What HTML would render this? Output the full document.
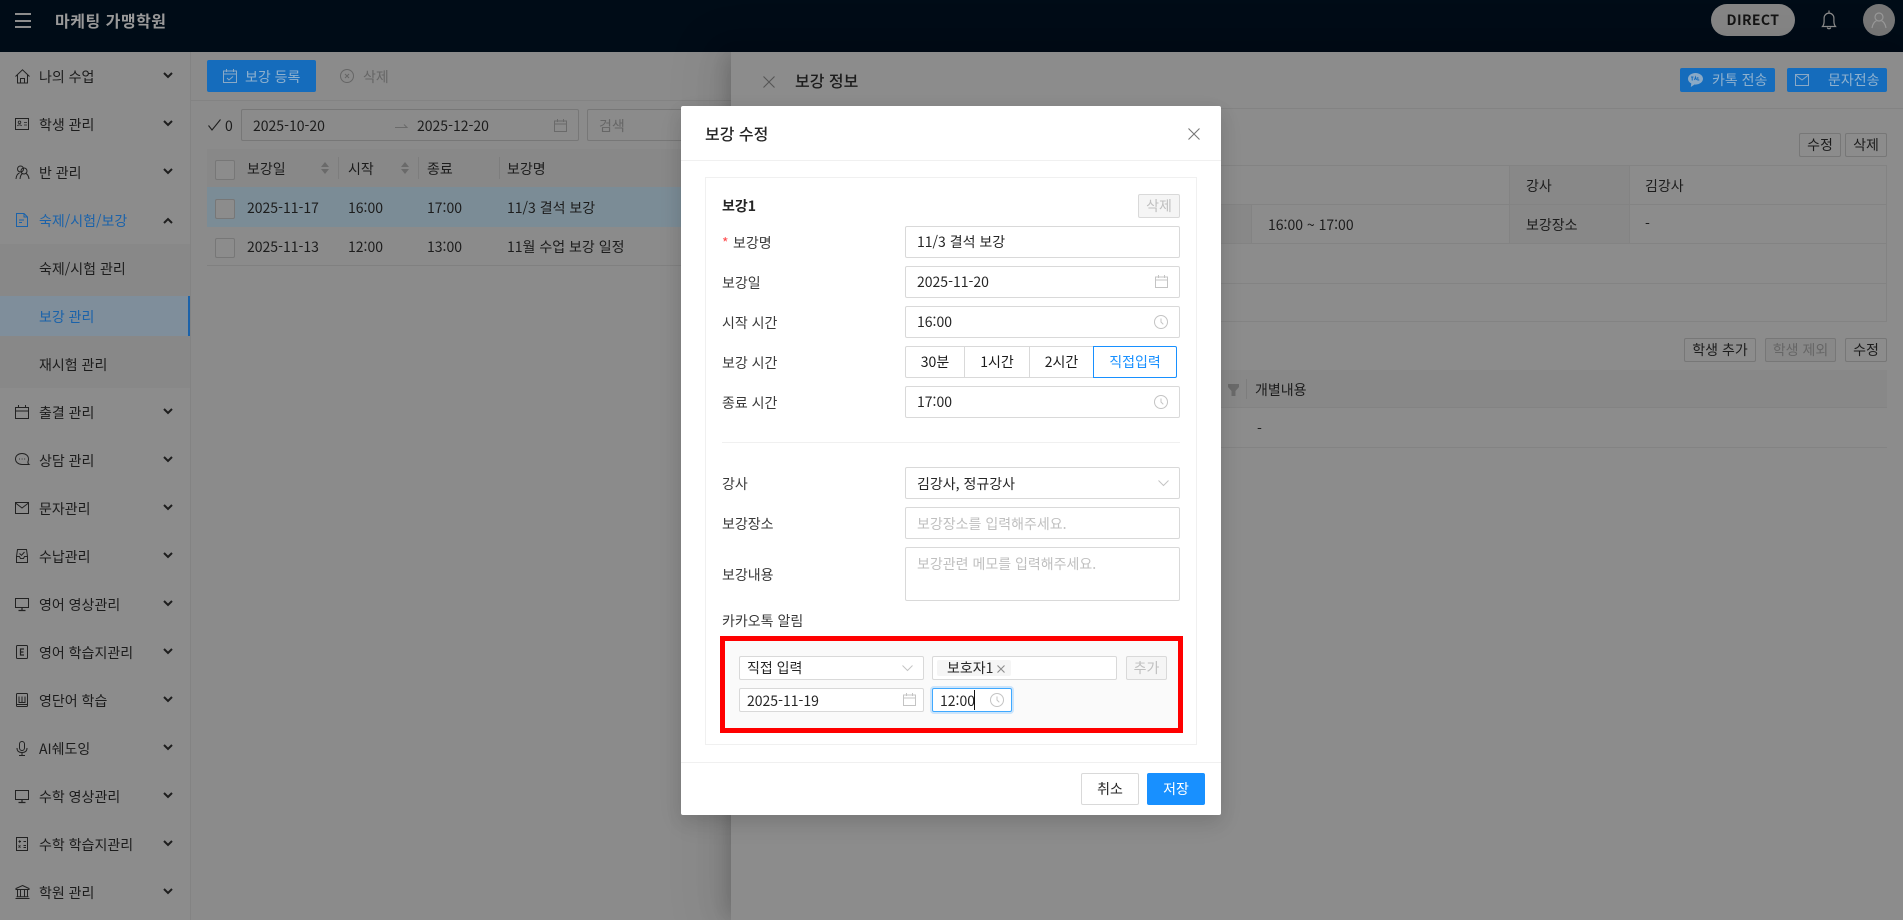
<!DOCTYPE html>
<html lang="ko"><head><meta charset="utf-8"><title>보강 수정</title>
<style>
*{box-sizing:border-box}
html,body{margin:0;padding:0;width:1903px;height:920px;overflow:hidden;background:#8b8b8b}
body{position:relative;font-family:"Noto Sans CJK KR","Liberation Sans",sans-serif;font-size:14px;color:#1c1c1c}
.a{position:absolute}
.t{position:absolute;white-space:nowrap;line-height:20px;height:20px}
.b{position:absolute;border:1px solid #777;border-radius:2px}
svg{position:absolute;overflow:visible;fill:none}
.menu{stroke:#222;stroke-width:1}
.chev{stroke:#1e1e1e;stroke-width:2}
.in{position:absolute;border:1px solid #d9d9d9;border-radius:2px;background:#fff}
.gi{stroke:#c4c4c4;stroke-width:1}
.l{color:#3a3a3a}
.ph{color:#bfbfbf}
.m{color:#262626}
.dbtn{text-align:center;line-height:22px;font-size:14px}
</style></head><body>

<!-- header -->
<div class="a" style="left:0;top:0;width:1903px;height:52px;background:#000c17"></div>
<div class="a" style="left:15px;top:13px;width:16px;height:1.5px;background:#8c8c8c"></div>
<div class="a" style="left:15px;top:20px;width:16px;height:1.5px;background:#8c8c8c"></div>
<div class="a" style="left:15px;top:26px;width:16px;height:1.5px;background:#8c8c8c"></div>
<div class="t" style="left:55px;top:10px;font-size:16px;font-weight:700;letter-spacing:.5px;color:#9a9a9a">마케팅 가맹학원</div>
<div class="a" style="left:1711px;top:4px;width:84px;height:32px;border-radius:16px;background:#858585;text-align:center;line-height:32px;font-weight:700;font-size:14px;color:#141414;letter-spacing:.4px">DIRECT</div>
<svg style="left:1820px;top:8px" width="18" height="24" viewBox="0 0 18 22" stroke="#8c8c8c" stroke-width="1.2"><path d="M2.500 17.500c1.300-1.500 1.600-3 1.600-5.500V9a4.900 4.900 0 0 1 9.800 0v3c0 2.500.3 4 1.600 5.500z"/><path d="M9 1.500v2.400M7.300 18.500a1.800 1.800 0 0 0 3.400 0"/></svg>
<div class="a" style="left:1863px;top:4px;width:32px;height:32px;border-radius:50%;background:#777"></div>
<svg style="left:1871px;top:12px" width="16" height="17" viewBox="0 0 16 17" stroke="#999" stroke-width="1.2"><circle cx="8" cy="5" r="4"/><path d="M1 16c.5-4 3-7 4.500-7M15 16c-.5-4-3-7-4.500-7"/></svg>

<!-- sidebar -->
<div class="a" style="left:0;top:52px;width:191px;height:868px;background:#8c8c8c;border-right:1px solid #838383"></div>
<div class="a" style="left:0;top:244px;width:190px;height:144px;background:#888"></div>
<div class="a" style="left:0;top:296px;width:190px;height:40px;background:#7f8e9b"></div>
<div class="a" style="left:188px;top:296px;width:2px;height:40px;background:#1a62aa"></div>

<div class="t" style="left:39px;top:67px">나의 수업</div>
<div class="t" style="left:39px;top:115px">학생 관리</div>
<div class="t" style="left:39px;top:163px">반 관리</div>
<div class="t" style="left:39px;top:211px;color:#1a62aa">숙제/시험/보강</div>
<div class="t" style="left:39px;top:259px">숙제/시험 관리</div>
<div class="t" style="left:39px;top:307px;color:#1a62aa">보강 관리</div>
<div class="t" style="left:39px;top:355px">재시험 관리</div>
<div class="t" style="left:39px;top:403px">출결 관리</div>
<div class="t" style="left:39px;top:451px">상담 관리</div>
<div class="t" style="left:39px;top:499px">문자관리</div>
<div class="t" style="left:39px;top:547px">수납관리</div>
<div class="t" style="left:39px;top:595px">영어 영상관리</div>
<div class="t" style="left:39px;top:643px">영어 학습지관리</div>
<div class="t" style="left:39px;top:691px">영단어 학습</div>
<div class="t" style="left:39px;top:739px">AI쉐도잉</div>
<div class="t" style="left:39px;top:787px">수학 영상관리</div>
<div class="t" style="left:39px;top:835px">수학 학습지관리</div>
<div class="t" style="left:39px;top:883px">학원 관리</div>

<!-- chevrons -->
<svg style="left:163px;top:72px" width="10" height="6" class="chev"><path d="M1 1l4 4 4-4"/></svg>
<svg style="left:163px;top:120px" width="10" height="6" class="chev"><path d="M1 1l4 4 4-4"/></svg>
<svg style="left:163px;top:168px" width="10" height="6" class="chev"><path d="M1 1l4 4 4-4"/></svg>
<svg style="left:163px;top:218px" width="10" height="6" class="chev"><path d="M1 5l4-4 4 4"/></svg>
<svg style="left:163px;top:408px" width="10" height="6" class="chev"><path d="M1 1l4 4 4-4"/></svg>
<svg style="left:163px;top:456px" width="10" height="6" class="chev"><path d="M1 1l4 4 4-4"/></svg>
<svg style="left:163px;top:504px" width="10" height="6" class="chev"><path d="M1 1l4 4 4-4"/></svg>
<svg style="left:163px;top:552px" width="10" height="6" class="chev"><path d="M1 1l4 4 4-4"/></svg>
<svg style="left:163px;top:600px" width="10" height="6" class="chev"><path d="M1 1l4 4 4-4"/></svg>
<svg style="left:163px;top:648px" width="10" height="6" class="chev"><path d="M1 1l4 4 4-4"/></svg>
<svg style="left:163px;top:696px" width="10" height="6" class="chev"><path d="M1 1l4 4 4-4"/></svg>
<svg style="left:163px;top:744px" width="10" height="6" class="chev"><path d="M1 1l4 4 4-4"/></svg>
<svg style="left:163px;top:792px" width="10" height="6" class="chev"><path d="M1 1l4 4 4-4"/></svg>
<svg style="left:163px;top:840px" width="10" height="6" class="chev"><path d="M1 1l4 4 4-4"/></svg>
<svg style="left:163px;top:888px" width="10" height="6" class="chev"><path d="M1 1l4 4 4-4"/></svg>

<!-- menu icons -->
<svg class="menu" style="left:15px;top:69px" width="15" height="15" viewBox="0 0 15 15"><path d="M.5 7.500L7.500.8l7 6.700M2.500 6v8h10V6M5.500 14V9.500h4V14"/></svg>
<svg class="menu" style="left:15px;top:118px" width="14" height="12" viewBox="0 0 14 12"><rect x=".5" y=".5" width="13" height="11"/><circle cx="4.500" cy="4.300" r="1.300" stroke-width=".8"/><path d="M2.500 8c.3-1.500 3.700-1.500 4 0M9 4.500h3M9 7h3" stroke-width=".8"/></svg>
<svg class="menu" style="left:15px;top:165px" width="15" height="15" viewBox="0 0 15 15"><circle cx="5.500" cy="4" r="3"/><circle cx="9" cy="6" r="3"/><path d="M1 14c.3-3.500 2-5.500 3.500-6M14 14c-.3-3-1.800-5-3-5.500M5 14c.3-3 1.500-5 2.500-5.500"/></svg>
<svg style="left:16px;top:213px" width="12" height="14" viewBox="0 0 12 14" stroke="#1a62aa"><path d="M.5.500h7.500l3.500 3.500v9.500H.5zM8 .5V4h3.500M3 7h5M3 9.500h3"/></svg>
<svg class="menu" style="left:15px;top:405px" width="14" height="14" viewBox="0 0 14 14"><rect x=".5" y="2.500" width="13" height="11"/><path d="M.5 6h13M3.500 0v3M10.500 0v3"/></svg>
<svg class="menu" style="left:15px;top:453px" width="15" height="14" viewBox="0 0 15 14"><path d="M7 .5C3.400.5.500 2.800.500 6c0 3 2.900 5.500 6.500 5.500h7c-1-.8-1.200-2-1-3 .4-.8.500-1.600.500-2.500C13.500 2.800 10.600.5 7 .5z"/><path d="M4 6h.8M6.700 6h.8M9.300 6h.8"/></svg>
<svg class="menu" style="left:15px;top:502px" width="14" height="12" viewBox="0 0 14 12"><rect x=".5" y=".5" width="13" height="11"/><path d="M.5 1l6.500 5 6.500-5"/></svg>
<svg class="menu" style="left:16px;top:549px" width="12" height="14" viewBox="0 0 12 14"><path d="M1.500.5h9l1 7v6H.5v-6zM.5 7.500H3.500L4.500 9.500h3L8.500 7.500h3M3.500 4.500l2 1.800 3-3.300"/></svg>
<svg class="menu" style="left:15px;top:598px" width="14" height="13" viewBox="0 0 14 13"><rect x=".5" y=".5" width="13" height="9"/><path d="M7 10v2M3.500 12.500h7" stroke-width="1.200"/></svg>
<svg class="menu" style="left:16px;top:645px" width="12" height="14" viewBox="0 0 12 14"><rect x=".5" y=".5" width="11" height="13" rx="1"/><path d="M8 4H4.500v6H8M4.500 7H7.500" stroke-width="1.200"/></svg>
<svg class="menu" style="left:16px;top:693px" width="12" height="14" viewBox="0 0 12 14"><rect x=".5" y=".5" width="11" height="13" rx="1"/><path d="M3 3.500V9.500H9V3.500M6 3.500V9.500M1 11.500h10" stroke-width="1"/></svg>
<svg class="menu" style="left:16px;top:741px" width="12" height="15" viewBox="0 0 12 15"><rect x="3.500" y=".5" width="5" height="9" rx="2.500"/><path d="M1 7c0 3 2 4.500 5 4.500S11 10 11 7M6 11.500V14M3 14.500h6"/></svg>
<svg class="menu" style="left:15px;top:790px" width="14" height="13" viewBox="0 0 14 13"><rect x=".5" y=".5" width="13" height="9"/><path d="M7 10v2M3.500 12.500h7" stroke-width="1.200"/></svg>
<svg class="menu" style="left:16px;top:837px" width="12" height="14" viewBox="0 0 12 14"><rect x=".5" y=".5" width="11" height="13"/><path d="M2.500 4.500h2.500M3.700 3.200v2.600M7.500 4.500H10M2.500 8.500l2 2M4.500 8.500l-2 2M7.500 8.500H10M7.500 10.500H10"/></svg>
<svg class="menu" style="left:15px;top:885px" width="15" height="14" viewBox="0 0 15 14"><path d="M7.500.5L14 3.500v1H1v-1zM2.500 5v6.500M5.500 5v6.500M9.500 5v6.500M12.500 5v6.500M1.500 11.800h12M.5 13.500h14"/></svg>

<!-- main toolbar -->
<div class="a" style="left:191px;top:100px;width:540px;height:1px;background:#838383"></div>
<div class="a" style="left:207px;top:60px;width:109px;height:32px;background:#156cbc;border-radius:2px"></div>
<svg style="left:223px;top:69px" width="14" height="14" viewBox="0 0 14 14" stroke="#8aa9c6"><rect x=".5" y="2" width="13" height="11.500"/><path d="M.5 5h13M3.500 0v3M10.500 0v3M4 9l2 2 4-3.500"/></svg>
<div class="t" style="left:245px;top:67px;color:#8fb1ce">보강 등록</div>
<svg style="left:340px;top:69px" width="14" height="14" viewBox="0 0 14 14" stroke="#666"><circle cx="7" cy="7" r="6.500"/><path d="M5 5l4 4M9 5l-4 4"/></svg>
<div class="t" style="left:363px;top:67px;color:#666">삭제</div>

<svg style="left:208px;top:119px" width="13" height="12" viewBox="0 0 13 12" stroke="#1e1e1e" stroke-width="1.100"><path d="M.5 6.500l3.500 4.500L12.500 .5"/></svg>
<div class="t" style="left:225px;top:116px">0</div>
<div class="b" style="left:241px;top:109px;width:338px;height:32px"></div>
<div class="t" style="left:253px;top:116px">2025-10-20</div>
<svg style="left:395px;top:122px" width="13" height="6" stroke="#6a6a6a"><path d="M0 5.500h12L9 2.500"/></svg>
<div class="t" style="left:417px;top:116px">2025-12-20</div>
<svg style="left:554px;top:119px" width="13" height="13" viewBox="0 0 13 13" stroke="#6a6a6a"><rect x=".5" y="2" width="12" height="10.500"/><path d="M.5 5h12M3.500 0v3M9.500 0v3"/></svg>
<div class="b" style="left:587px;top:109px;width:120px;height:32px"></div>
<div class="t" style="left:599px;top:116px;color:#666">검색</div>

<!-- main table -->
<div class="a" style="left:207px;top:149px;width:524px;height:38px;background:#888"></div>
<div class="a" style="left:207px;top:187px;width:524px;height:40px;background:#7b8c96"></div>
<div class="a" style="left:207px;top:265px;width:524px;height:1px;background:#808080"></div>
<div class="a" style="left:338px;top:157px;width:1px;height:22px;background:#7d7d7d"></div>
<div class="a" style="left:418px;top:157px;width:1px;height:22px;background:#7d7d7d"></div>
<div class="a" style="left:499px;top:157px;width:1px;height:22px;background:#7d7d7d"></div>
<div class="b" style="left:215px;top:160px;width:20px;height:20px;background:#8c8c8c"></div>
<div class="b" style="left:215px;top:199px;width:20px;height:20px;background:#8c8c8c"></div>
<div class="b" style="left:215px;top:238px;width:20px;height:20px;background:#8c8c8c"></div>
<div class="t" style="left:247px;top:159px">보강일</div>
<div class="t" style="left:348px;top:159px">시작</div>
<div class="t" style="left:427px;top:159px">종료</div>
<div class="t" style="left:507px;top:159px">보강명</div>
<svg style="left:321px;top:162px" width="8" height="12"><path fill="#6a6a6a" d="M4 0l4 5H0zM4 12L0 7h8z"/></svg>
<svg style="left:401px;top:162px" width="8" height="12"><path fill="#6a6a6a" d="M4 0l4 5H0zM4 12L0 7h8z"/></svg>
<div class="t" style="left:247px;top:198px">2025-11-17</div>
<div class="t" style="left:348px;top:198px">16:00</div>
<div class="t" style="left:427px;top:198px">17:00</div>
<div class="t" style="left:507px;top:198px">11/3 결석 보강</div>
<div class="t" style="left:247px;top:237px">2025-11-13</div>
<div class="t" style="left:348px;top:237px">12:00</div>
<div class="t" style="left:427px;top:237px">13:00</div>
<div class="t" style="left:507px;top:237px">11월 수업 보강 일정</div>

<!-- drawer -->
<div class="a" style="left:731px;top:52px;width:1172px;height:868px;background:#8c8c8c;box-shadow:-6px 0 16px -4px rgba(0,0,0,.14),-9px 0 28px 0 rgba(0,0,0,.08),-12px 0 48px 16px rgba(0,0,0,.04)"></div>
<div class="a" style="left:731px;top:108px;width:1172px;height:1px;background:#838383"></div>
<svg style="left:763px;top:76px" width="12" height="12" stroke="#555" stroke-width="1.100"><path d="M.5.500l11 11M11.500.500l-11 11"/></svg>
<div class="t" style="left:795px;top:70px;font-size:16px;font-weight:500">보강 정보</div>

<div class="a" style="left:1680px;top:68px;width:95px;height:24px;background:#156cbc;border-radius:2px"></div>
<svg style="left:1688px;top:73px" width="15" height="14" viewBox="0 0 15 14"><path fill="#8aa9c6" d="M7.500 0C3.400 0 0 2.500 0 5.800c0 2 1.300 3.700 3.300 4.700L2.800 14l3.700-2.500c.3 0 .7.100 1 .100 4.100 0 7.500-2.600 7.500-5.800S11.600 0 7.500 0z"/><path stroke="#156cbc" stroke-width="1" d="M3 4h2.500M4.200 4v3.500M6.500 7l1-3 1 3M9.800 4v3h1.500"/></svg>
<div class="t" style="left:1712px;top:70px;color:#8fb1ce">카톡 전송</div>
<div class="a" style="left:1787px;top:68px;width:100px;height:24px;background:#156cbc;border-radius:2px"></div>
<svg style="left:1795px;top:74px" width="14" height="12" viewBox="0 0 14 12" stroke="#8aa9c6"><rect x=".5" y=".5" width="13" height="11"/><path d="M.5 1L7 6l6.500-5"/></svg>
<div class="t" style="left:1828px;top:70px;color:#8fb1ce">문자전송</div>

<div class="b dbtn" style="left:1799px;top:133px;width:42px;height:24px">수정</div>
<div class="b dbtn" style="left:1845px;top:133px;width:42px;height:24px">삭제</div>

<!-- drawer table 1 -->
<div class="a" style="left:731px;top:165px;width:1156px;height:157px;border:1px solid #838383;border-left:0"></div>
<div class="a" style="left:731px;top:204px;width:1156px;height:1px;background:#838383"></div>
<div class="a" style="left:731px;top:243px;width:1156px;height:1px;background:#838383"></div>
<div class="a" style="left:731px;top:283px;width:1156px;height:1px;background:#838383"></div>
<div class="a" style="left:1221px;top:205px;width:31px;height:38px;background:#888;border-right:1px solid #838383"></div>
<div class="a" style="left:1509px;top:166px;width:121px;height:77px;background:#888;border-left:1px solid #838383;border-right:1px solid #838383"></div>
<div class="a" style="left:1509px;top:204px;width:121px;height:1px;background:#838383"></div>
<div class="t" style="left:1526px;top:176px">강사</div>
<div class="t" style="left:1645px;top:176px">김강사</div>
<div class="t" style="left:1268px;top:215px">16:00 ~ 17:00</div>
<div class="t" style="left:1526px;top:215px">보강장소</div>
<div class="t" style="left:1645px;top:214px">-</div>

<div class="b dbtn" style="left:1684px;top:338px;width:72px;height:24px">학생 추가</div>
<div class="b dbtn" style="left:1765px;top:338px;width:71px;height:24px;color:#666;background:#888">학생 제외</div>
<div class="b dbtn" style="left:1845px;top:338px;width:42px;height:24px">수정</div>

<!-- drawer table 2 -->
<div class="a" style="left:731px;top:370px;width:1156px;height:38px;background:#888;border-bottom:1px solid #838383"></div>
<div class="a" style="left:731px;top:447px;width:1156px;height:1px;background:#838383"></div>
<svg style="left:1228px;top:384px" width="11" height="12"><path fill="#6a6a6a" d="M0 0h11v3L7.500 7v5h-4V7L0 3z"/></svg>
<div class="a" style="left:1246px;top:379px;width:1px;height:20px;background:#7d7d7d"></div>
<div class="t" style="left:1255px;top:380px">개별내용</div>
<div class="t" style="left:1257px;top:419px">-</div>

<!-- modal -->
<div class="a" style="left:681px;top:106px;width:540px;height:709px;background:#fff;border-radius:2px;box-shadow:0 6px 16px rgba(0,0,0,.1),0 9px 28px rgba(0,0,0,.06)"></div>
<div class="t m" style="left:705px;top:122px;font-size:16px;font-weight:500;line-height:22px;height:22px">보강 수정</div>
<svg style="left:1188px;top:128px" width="12" height="12" stroke="#777" stroke-width="1.100"><path d="M.5.500l11 11M11.500.500l-11 11"/></svg>
<div class="a" style="left:681px;top:160px;width:540px;height:1px;background:#f0f0f0"></div>
<div class="a" style="left:705px;top:177px;width:492px;height:568px;border:1px solid #f0f0f0"></div>

<div class="t m" style="left:722px;top:196px;font-weight:700">보강1</div>
<div class="a" style="left:1138px;top:194px;width:42px;height:24px;background:#f5f5f5;border:1px solid #d9d9d9;border-radius:2px;color:#bfbfbf;text-align:center;line-height:22px">삭제</div>

<div class="t" style="left:722px;top:233px;color:#ff4d4f">*</div>
<div class="t l" style="left:733px;top:233px">보강명</div>
<div class="t l" style="left:722px;top:273px">보강일</div>
<div class="t l" style="left:722px;top:313px">시작 시간</div>
<div class="t l" style="left:722px;top:353px">보강 시간</div>
<div class="t l" style="left:722px;top:393px">종료 시간</div>

<div class="in" style="left:905px;top:226px;width:275px;height:32px"></div>
<div class="t m" style="left:917px;top:232px">11/3 결석 보강</div>
<div class="in" style="left:905px;top:266px;width:275px;height:32px"></div>
<div class="t m" style="left:917px;top:272px">2025-11-20</div>
<svg class="gi" style="left:1155px;top:275px" width="13" height="13" viewBox="0 0 13 13"><rect x=".5" y="2" width="12" height="10.500"/><path d="M.5 5h12M3.500 0v3M9.500 0v3"/></svg>
<div class="in" style="left:905px;top:306px;width:275px;height:32px"></div>
<div class="t m" style="left:917px;top:312px">16:00</div>
<svg class="gi" style="left:1154px;top:315px" width="14" height="14" viewBox="0 0 14 14"><circle cx="7" cy="7" r="6.500"/><path d="M7 3.500V7l2.300 2.300"/></svg>

<div class="in" style="left:905px;top:346px;width:60px;height:32px;border-radius:2px 0 0 2px;text-align:center;line-height:30px">30분</div>
<div class="in" style="left:964px;top:346px;width:66px;height:32px;border-radius:0;text-align:center;line-height:30px">1시간</div>
<div class="in" style="left:1029px;top:346px;width:65px;height:32px;border-radius:0;text-align:center;line-height:30px">2시간</div>
<div class="in" style="left:1093px;top:346px;width:84px;height:32px;border:1px solid #1890ff;border-radius:0 2px 2px 0;color:#1890ff;text-align:center;line-height:30px">직접입력</div>

<div class="in" style="left:905px;top:386px;width:275px;height:32px"></div>
<div class="t m" style="left:917px;top:392px">17:00</div>
<svg class="gi" style="left:1154px;top:395px" width="14" height="14" viewBox="0 0 14 14"><circle cx="7" cy="7" r="6.500"/><path d="M7 3.500V7l2.300 2.300"/></svg>

<div class="a" style="left:722px;top:442px;width:458px;height:1px;background:#f0f0f0"></div>

<div class="t l" style="left:722px;top:474px">강사</div>
<div class="in" style="left:905px;top:467px;width:275px;height:32px"></div>
<div class="t m" style="left:917px;top:474px">김강사, 정규강사</div>
<svg class="gi" style="left:1158px;top:480px" width="11" height="7"><path d="M.5.500l5 5 5-5"/></svg>

<div class="t l" style="left:722px;top:514px">보강장소</div>
<div class="in" style="left:905px;top:507px;width:275px;height:32px"></div>
<div class="t ph" style="left:917px;top:514px">보강장소를 입력해주세요.</div>

<div class="t l" style="left:722px;top:565px">보강내용</div>
<div class="in" style="left:905px;top:547px;width:275px;height:54px"></div>
<div class="t ph" style="left:917px;top:554px">보강관련 메모를 입력해주세요.</div>

<div class="t l" style="left:722px;top:611px">카카오톡 알림</div>

<div class="a" style="left:720px;top:636px;width:463px;height:97px;background:#fafafa;border:5px solid #ff0000"></div>

<div class="in" style="left:739px;top:656px;width:185px;height:24px"></div>
<div class="t m" style="left:747px;top:658px">직접 입력</div>
<svg class="gi" style="left:902px;top:665px" width="11" height="7"><path d="M.5.500l5 5 5-5"/></svg>
<div class="in" style="left:932px;top:656px;width:185px;height:24px"></div>
<div class="a" style="left:937px;top:660px;width:74px;height:16px;background:#f5f5f5;border-radius:2px"></div>
<div class="t m" style="left:947px;top:658px">보호자1</div>
<svg style="left:997px;top:665px" width="8" height="8" stroke="#8c8c8c" stroke-width="1.100"><path d="M.5.500l7 7M7.500.500l-7 7"/></svg>
<div class="a" style="left:1126px;top:656px;width:41px;height:24px;background:#f5f5f5;border:1px solid #d9d9d9;border-radius:2px;color:#bfbfbf;text-align:center;line-height:22px">추가</div>

<div class="in" style="left:739px;top:688px;width:185px;height:24px"></div>
<div class="t m" style="left:747px;top:691px">2025-11-19</div>
<svg class="gi" style="left:903px;top:693px" width="13" height="13" viewBox="0 0 13 13"><rect x=".5" y="2" width="12" height="10.500"/><path d="M.5 5h12M3.500 0v3M9.500 0v3"/></svg>
<div class="in" style="left:932px;top:688px;width:80px;height:24px;border-color:#40a9ff;box-shadow:0 0 0 2px rgba(24,144,255,.2)"></div>
<div class="t m" style="left:940px;top:691px">12:00</div>
<div class="a" style="left:974px;top:690px;width:1px;height:20px;background:#111"></div>
<svg class="gi" style="left:990px;top:693px" width="14" height="14" viewBox="0 0 14 14"><circle cx="7" cy="7" r="6.500"/><path d="M7 3.500V7l2.300 2.300"/></svg>

<div class="a" style="left:681px;top:762px;width:540px;height:1px;background:#f0f0f0"></div>
<div class="in" style="left:1081px;top:773px;width:58px;height:32px;text-align:center;line-height:30px;color:#262626">취소</div>
<div class="a" style="left:1147px;top:773px;width:58px;height:32px;background:#1890ff;border-radius:2px;color:#fff;text-align:center;line-height:32px">저장</div>

</body></html>
